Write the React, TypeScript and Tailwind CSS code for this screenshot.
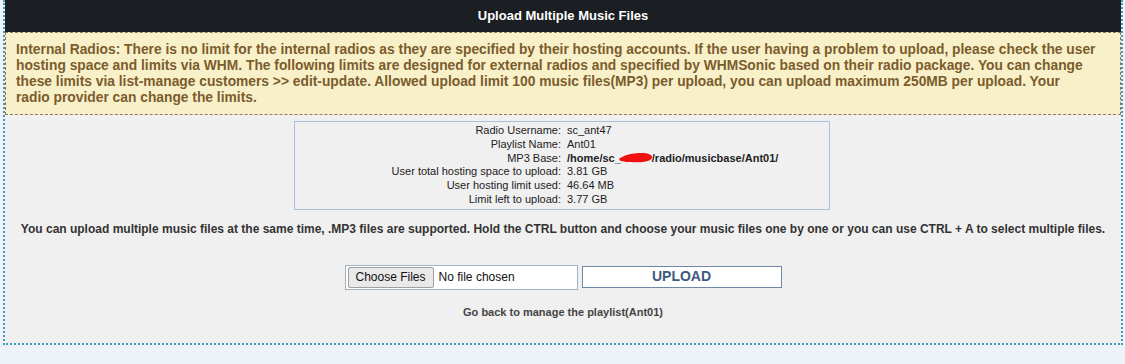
export default function App() {
  return (
    <div className="min-h-[364px] bg-[#eef3f8] pl-[3px] pr-[2px] font-['Liberation_Sans',Arial,sans-serif]">
      <div className="border-x-2 border-b-2 border-dotted border-[#3a9ec4] bg-[#f0f0f0] pb-[23px]">
        <div className="flex h-[32px] items-center justify-center bg-[#1b1e22] text-[13px] font-bold text-white">
          Upload Multiple Music Files
        </div>
        <div className="border border-dashed border-[#8c7a56] bg-[#f8f0c9] pl-[10px] pr-[4px] pt-[9px] pb-[8px] text-[13.8px] font-bold leading-[16px] text-[#7b5c2c]">
          Internal Radios: There is no limit for the internal radios as they are specified by their hosting accounts. If the user having a problem to upload, please check the user hosting space and limits via WHM. The following limits are designed for external radios and specified by WHMSonic based on their radio package. You can change these limits via list-manage customers &gt;&gt; edit-update. Allowed upload limit 100 music files(MP3) per upload, you can upload maximum 250MB per upload. Your
          <br />
          radio provider can change the limits.
        </div>

        <div className="mt-[6px] flex justify-center">
          <div className="ml-[-2px] w-[536px] border border-[#a9c0dc] py-[2px] text-[11px] leading-[13.8px] text-[#222]">
            <Row label="Radio Username:" value="sc_ant47" />
            <Row label="Playlist Name:" value="Ant01" />
            <div className="flex">
              <div className="w-[266px] text-right">MP3 Base:</div>
              <div className="ml-[6px] flex items-center font-bold">
                /home/sc_
                <svg width="36" height="12" viewBox="0 0 36 12" className="-ml-[3px] -mr-[2px]">
                  <path d="M1 7 C6 3, 14 1, 24 1 C30 1, 35 3, 34 6 C32 10, 22 11, 13 10 C7 10, 2 10, 1 7 Z" fill="#f01010" />
                </svg>
                /radio/musicbase/Ant01/
              </div>
            </div>
            <Row label="User total hosting space to upload:" value="3.81 GB" />
            <Row label="User hosting limit used:" value="46.64 MB" />
            <Row label="Limit left to upload:" value="3.77 GB" />
          </div>
        </div>

        <p className="mt-[10px] text-center text-[12px] font-bold text-[#333]">
          You can upload multiple music files at the same time, .MP3 files are supported. Hold the CTRL button and choose your music files one by one or you can use CTRL + A to select multiple files.
        </p>

        <div className="mt-[27px] flex justify-center gap-[4px]">
          <div className="flex h-[25px] w-[233px] items-center border border-[#9fb2c6] bg-white pl-[2px] text-[12px] text-[#111]">
            <span className="flex h-[21px] items-center rounded-[2px] border border-[#a0a0a0] bg-[#e9e9e9] px-[7px]">Choose Files</span>
            <span className="ml-[5px]">No file chosen</span>
          </div>
          <div className="mt-[1px] flex h-[22px] w-[200px] items-center justify-center border border-[#6d89a6] bg-white text-[14px] font-bold text-[#3e5a7e]">
            UPLOAD
          </div>
        </div>

        <p className="mt-[14px] text-center text-[11px] font-bold text-[#444]">
          Go back to manage the playlist(Ant01)
        </p>
      </div>
    </div>
  );
}

function Row({ label, value }: { label: string; value: string }) {
  return (
    <div className="flex">
      <div className="w-[266px] text-right">{label}</div>
      <div className="ml-[6px]">{value}</div>
    </div>
  );
}
